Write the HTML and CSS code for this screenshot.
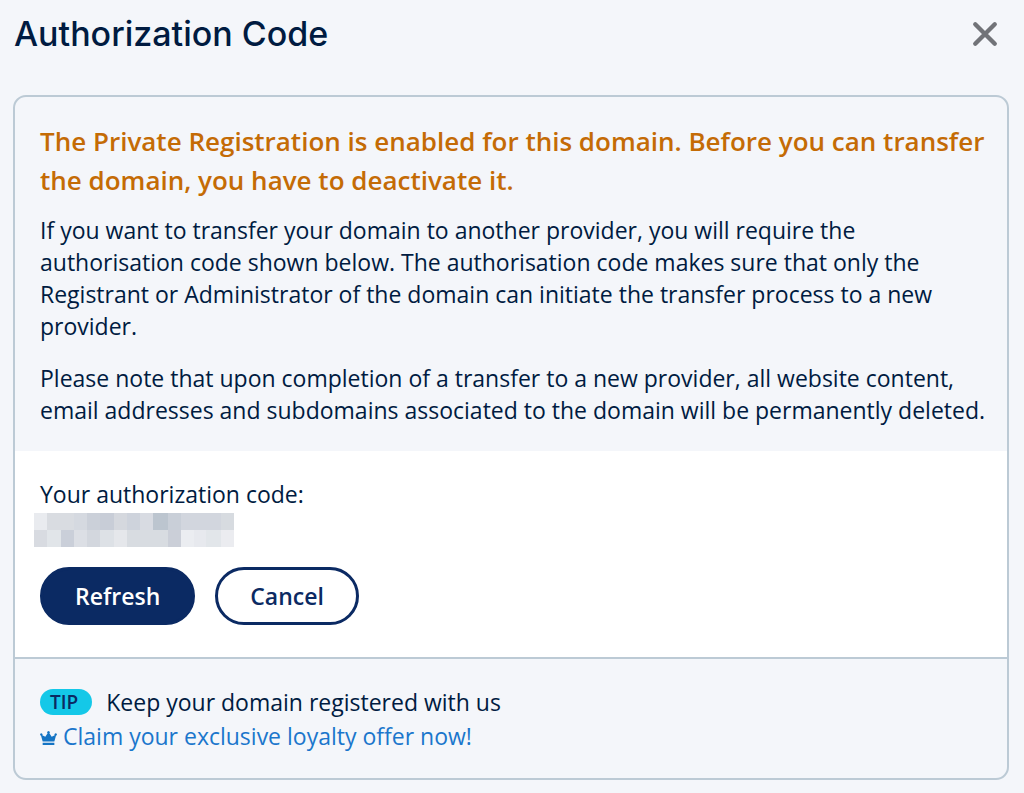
FILE: index.html
```
<!DOCTYPE html>
<html lang="en">
<head>
<meta charset="utf-8">
<meta name="viewport" content="width=device-width, initial-scale=1">
<title>Authorization Code</title>
<link rel="stylesheet" href="styles.css">
</head>
<body>
<main class="dialog">
  <header class="dialog-header">
    <h1 class="dialog-title">Authorization Code</h1>
    <button class="close-button" type="button" aria-label="Close">
      <svg class="close-icon" viewBox="0 0 24 24" aria-hidden="true"><path d="M3 3 21 21M21 3 3 21"/></svg>
    </button>
  </header>
  <div class="card">
    <section class="notice">
      <h2 class="notice-title">The Private Registration is enabled for this domain. Before you can transfer the domain, you have to deactivate it.</h2>
      <p class="notice-text">If you want to transfer your domain to another provider, you will require the authorisation code shown below. The authorisation code makes sure that only the Registrant or Administrator of the domain can initiate the transfer process to a new provider.</p>
      <p class="notice-text">Please note that upon completion of a transfer to a new provider, all website content, email addresses and subdomains associated to the domain will be permanently deleted.</p>
    </section>
    <section class="code">
      <p class="code-label">Your authorization code:</p>
      <svg class="code-value" viewBox="0 0 200 34" role="img" aria-label="Hidden code" shape-rendering="crispEdges">
        <path fill="#e9ebef" d="M0 0h13v17H0z"/>
        <path fill="#d9dce1" d="M13 0h27v17H13z"/>
        <path fill="#d5d9e0" d="M40 0h13v17H40z"/>
        <path fill="#cbd0d9" d="M53 0h13v17H53z"/>
        <path fill="#c8cdd7" d="M66 0h14v17H66z"/>
        <path fill="#d5d8de" d="M80 0h13v17H80z"/>
        <path fill="#ced3dc" d="M93 0h13v17H93z"/>
        <path fill="#d8dbe2" d="M106 0h13v17h-13z"/>
        <path fill="#bcc5cf" d="M119 0h15v17h-15z"/>
        <path fill="#c9cfd8" d="M134 0h13v17h-13z"/>
        <path fill="#d2d6de" d="M147 0h40v17h-40z"/>
        <path fill="#d7dbe0" d="M187 0h13v17h-13z"/>
        <path fill="#d8dbe1" d="M0 17h13v17H0z"/>
        <path fill="#e1e5e9" d="M13 17h14v17H13z"/>
        <path fill="#cacfd9" d="M27 17h13v17H27z"/>
        <path fill="#dcdfe5" d="M40 17h13v17H40z"/>
        <path fill="#d3d7de" d="M53 17h13v17H53z"/>
        <path fill="#dde1e6" d="M66 17h14v17H66z"/>
        <path fill="#e5e7eb" d="M80 17h13v17H80z"/>
        <path fill="#d8dce1" d="M93 17h41v17H93z"/>
        <path fill="#cbcfd8" d="M134 17h13v17h-13z"/>
        <path fill="#ebedf1" d="M147 17h13v17h-13z"/>
        <path fill="#e7e9ee" d="M160 17h12v17h-12z"/>
        <path fill="#e2e6ea" d="M172 17h15v17h-15z"/>
        <path fill="#ebecf0" d="M187 17h13v17h-13z"/>
      </svg>
      <div class="actions">
        <button class="button button-primary" type="button">Refresh</button>
        <button class="button button-secondary" type="button">Cancel</button>
      </div>
    </section>
    <footer class="tip">
      <p class="tip-line"><span class="tip-badge">TIP</span>Keep your domain registered with us</p>
      <a class="tip-link" href="#">
        <svg class="crown-icon" viewBox="0 0 16 15" aria-hidden="true"><path d="M2.500 10.700 1 5.300A1.100 1.100 0 1 1 2.100 4.900L5 6.400 7.200 3.100A1.200 1.200 0 1 1 8.800 3.100L11 6.400 13.900 4.900A1.100 1.100 0 1 1 15 5.300L13.500 10.700ZM2.500 12H13.500V14.200H2.500Z"/></svg>
        <span>Claim your exclusive loyalty offer now!</span>
      </a>
    </footer>
  </div>
</main>
</body>
</html>
```
FILE: styles.css
```
* {
  box-sizing: border-box;
}

body {
  margin: 0;
  background: #f4f6fa;
  color: #001b41;
  font-family: "Open Sans", "Noto Sans", sans-serif;
  font-size: 23px;
  line-height: 32px;
}

h1,
h2,
p {
  margin: 0;
}

.dialog {
  padding: 12px 15px 14px 13px;
}

.dialog-header {
  display: flex;
  align-items: center;
  justify-content: space-between;
  padding: 0 11px 0 1px;
  margin-bottom: 39px;
}

.dialog-title {
  font-family: Inter, Roboto, sans-serif;
  font-size: 34px;
  font-weight: 500;
  line-height: 44px;
}

.close-button {
  display: flex;
  padding: 0;
  border: 0;
  background: none;
  cursor: pointer;
}

.close-icon {
  width: 26px;
  height: 26px;
  fill: none;
  stroke: #717378;
  stroke-width: 4;
  stroke-linecap: round;
}

.card {
  overflow: hidden;
  border: 2px solid #bccad5;
  border-radius: 13px;
}

.notice {
  padding: 25px 18px 25px 25px;
}

.notice-title {
  margin-bottom: 14px;
  color: #c46b05;
  font-size: 26px;
  font-weight: 600;
  line-height: 39px;
}

.notice-text + .notice-text {
  margin-top: 20px;
}

.code {
  padding: 27px 25px 32px;
  border-bottom: 2px solid #bccad5;
  background: #fff;
}

.code-value {
  display: block;
  width: 200px;
  height: 34px;
  margin: 3px 0 20px -6px;
}

.actions {
  display: flex;
  gap: 20px;
}

.button {
  padding: 9px 32px;
  border: 3px solid #0b2a63;
  border-radius: 29px;
  font: inherit;
  font-weight: 600;
  line-height: 34px;
  cursor: pointer;
}

.button-primary {
  background: #0b2a63;
  color: #fff;
}

.button-secondary {
  background: #fff;
  color: #0b2a63;
}

.tip {
  padding: 26px 25px 25px;
  line-height: 34px;
}

.tip-line {
  display: flex;
  align-items: center;
  gap: 14px;
}

.tip-badge {
  padding: 0 14px 0 10px;
  border-radius: 13px;
  background: #14c8e8;
  color: #0b2a63;
  font-size: 19px;
  font-weight: 600;
  line-height: 26px;
}

.tip-link {
  display: flex;
  width: fit-content;
  align-items: center;
  gap: 6px;
  color: #1b76cc;
  text-decoration: none;
}

.crown-icon {
  width: 17px;
  height: 16px;
  margin-top: 3px;
  fill: #1474c4;
}
```
